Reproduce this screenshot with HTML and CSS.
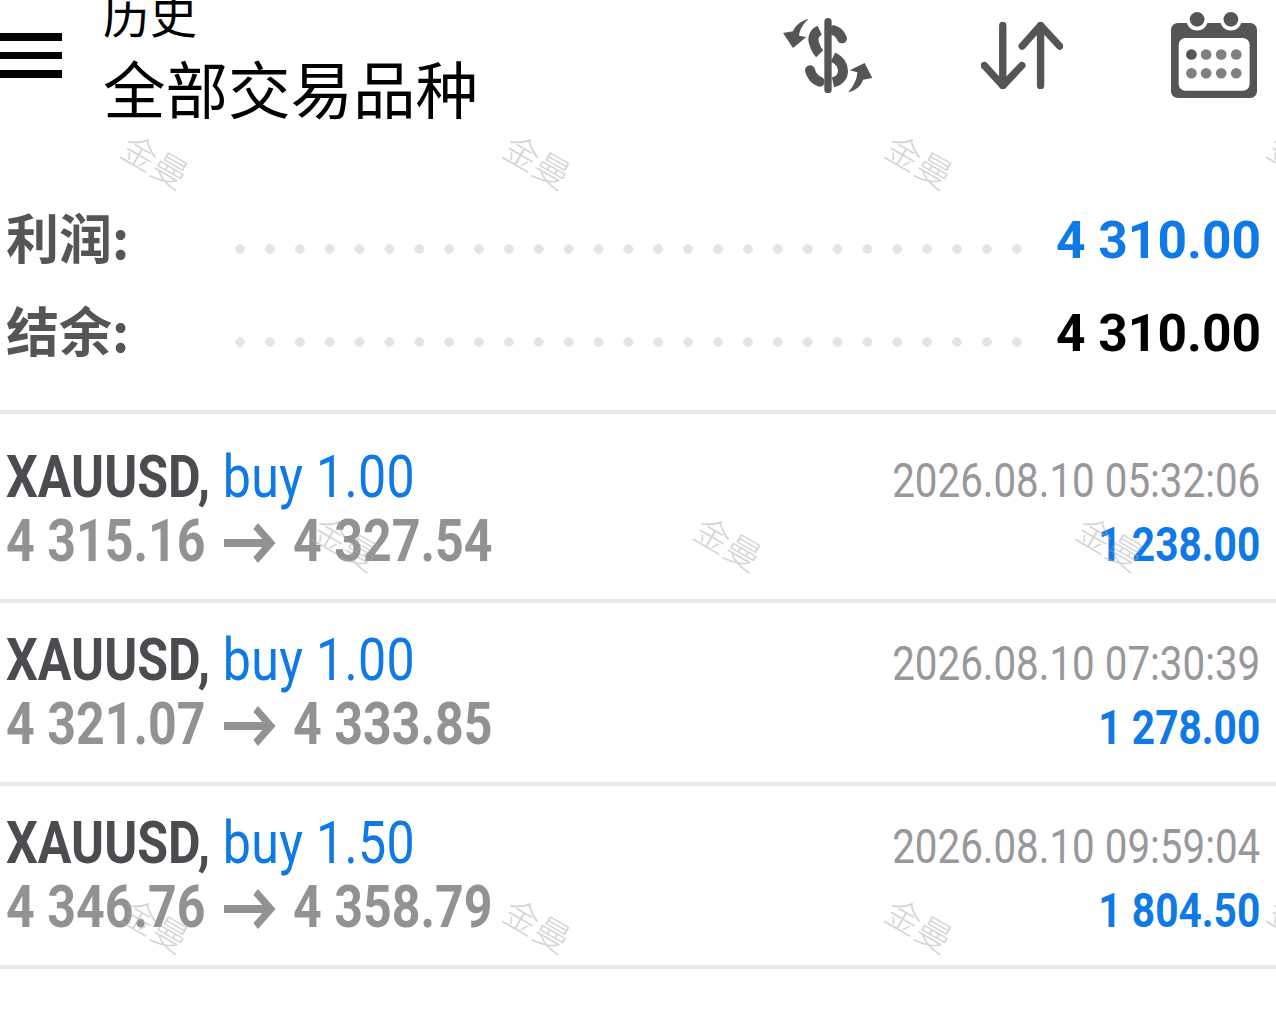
FILE: index.html
```html
<!DOCTYPE html>
<html lang="zh-CN">
<head>
  <meta charset="UTF-8" />
  <title>历史</title>
  <link rel="stylesheet" href="styles.css">
</head>
<body>
  <header class="top">
    <div class="menu"><span></span><span></span><span></span></div>
    <div class="titles">
      <div class="title-small">历史</div>
      <div class="title-big">全部交易品种</div>
    </div>
    <div class="tools">
      <svg class="ic-money" viewBox="70 55 270 225">
        <path class="fill" d="M194 66a11 11 0 0 1 22 0v204a11 11 0 0 1-22 0z"/>
        <path class="line" d="M180 92C163 100 158 114 163 130c4 14 9 24 17 32"/>
        <path class="line cap" d="M222 92c12 3 20 12 25 24"/>
        <path class="line" d="M220 172c20 10 30 24 30 42 0 18-12 30-30 34"/>
        <path class="line cap" d="M151 212c4 16 14 28 29 34"/>
        <path class="fill" d="M147 57C120 65 105 80 100 95L70 100 100 145 140 112 118 108C120 90 130 72 147 57z"/>
        <path class="fill" d="M265 278C290 272 305 258 310 240L338 235 315 190 270 212 293 218C292 240 280 262 265 278z"/>
      </svg>
      <svg class="ic-sort" viewBox="665 68 245 200">
        <path class="line thin" d="M730 78v180M675 198l55 60 57-60"/>
        <path class="line thin" d="M843 258V78M788 140l55-62 57 62"/>
      </svg>
      <svg class="ic-cal" viewBox="1235 35 257 257">
        <rect class="fill" x="1235" y="68" width="257" height="224" rx="20"/>
        <rect class="white" x="1258" y="113" width="212" height="157" rx="20"/>
        <circle class="white" cx="1313" cy="57" r="33"/>
        <circle class="white" cx="1414" cy="57" r="33"/>
        <circle class="fill" cx="1313" cy="57" r="22"/>
        <circle class="fill" cx="1414" cy="57" r="22"/>
        <circle class="fill" cx="1296" cy="162" r="16"/>
        <circle class="soft" cx="1340" cy="162" r="16"/>
        <circle class="soft" cx="1385" cy="162" r="16"/>
        <circle class="soft" cx="1430" cy="162" r="16"/>
        <circle class="soft" cx="1296" cy="218" r="16"/>
        <circle class="soft" cx="1340" cy="218" r="16"/>
        <circle class="soft" cx="1385" cy="218" r="16"/>
        <circle class="soft" cx="1430" cy="218" r="16"/>
      </svg>
    </div>
  </header>

  <section class="summary">
    <div class="sum-row">
      <span class="sum-label">利润:</span>
      <span class="dots"></span>
      <span class="sum-value blue">4 310.00</span>
    </div>
    <div class="sum-row">
      <span class="sum-label">结余:</span>
      <span class="dots"></span>
      <span class="sum-value">4 310.00</span>
    </div>
  </section>

  <section class="deals">
    <div class="deal">
      <div class="deal-left">
        <div class="line-a"><b>XAUUSD,</b> <span class="blue">buy 1.00</span></div>
        <div class="line-b">4 315.16<svg class="arrow" viewBox="0 0 62 40"><path d="M0 20h56M38 3l18 17-18 17"/></svg>4 327.54</div>
      </div>
      <div class="deal-right">
        <div class="date">2026.08.10 05:32:06</div>
        <div class="profit">1 238.00</div>
      </div>
    </div>
    <div class="deal">
      <div class="deal-left">
        <div class="line-a"><b>XAUUSD,</b> <span class="blue">buy 1.00</span></div>
        <div class="line-b">4 321.07<svg class="arrow" viewBox="0 0 62 40"><path d="M0 20h56M38 3l18 17-18 17"/></svg>4 333.85</div>
      </div>
      <div class="deal-right">
        <div class="date">2026.08.10 07:30:39</div>
        <div class="profit">1 278.00</div>
      </div>
    </div>
    <div class="deal">
      <div class="deal-left">
        <div class="line-a"><b>XAUUSD,</b> <span class="blue">buy 1.50</span></div>
        <div class="line-b">4 346.76<svg class="arrow" viewBox="0 0 62 40"><path d="M0 20h56M38 3l18 17-18 17"/></svg>4 358.79</div>
      </div>
      <div class="deal-right">
        <div class="date">2026.08.10 09:59:04</div>
        <div class="profit">1 804.50</div>
      </div>
    </div>
  </section>

  <div class="marks">
    <span class="mark m1">金曼</span>
    <span class="mark m2">金曼</span>
    <span class="mark m3">金曼</span>
    <span class="mark m4">金曼</span>
    <span class="mark m5">金曼</span>
    <span class="mark m6">金曼</span>
    <span class="mark m7">金曼</span>
    <span class="mark m8">金曼</span>
    <span class="mark m9">金曼</span>
    <span class="mark m10">金曼</span>
    <span class="mark m11">金曼</span>
  </div>
</body>
</html>
```

FILE: styles.css
```css
html, body { margin: 0; padding: 0; }
body {
  width: 1276px;
  height: 1029px;
  position: relative;
  overflow: hidden;
  background: #fff;
  font-family: Roboto, "Noto Sans CJK SC", sans-serif;
}
.blue { color: #0f7ae5; }

/* header */
.top { display: flex; height: 135px; }
.menu {
  width: 62px;
  margin-top: 33px;
  display: flex;
  flex-direction: column;
  gap: 11px;
}
.menu span { display: block; height: 7.5px; background: #000; }
.titles {
  margin-left: 41px;
  font-family: "Noto Sans CJK SC", sans-serif;
  color: #000;
}
.title-small { font-size: 47px; line-height: 46px; margin-top: -10px; }
.title-big { font-size: 62.5px; line-height: 62px; margin-top: 20px; }
.tools { position: relative; flex: 1; display: flex; padding: 12px 19px 0 0; justify-content: flex-end; }
.fill { fill: #555; }
.soft { fill: #808080; }
.white { fill: #fff; }
.line { fill: none; stroke: #555; stroke-width: 30; }
.line.cap { stroke-linecap: round; }
.line.thin { stroke-width: 22; stroke-linecap: round; stroke-linejoin: round; }
.ic-money { width: 90px; height: 75px; margin-top: 6px; }
.ic-sort { width: 82px; height: 67px; margin: 10px 0 0 108px; }
.ic-cal { width: 86px; height: 86px; margin-left: 108px; }

/* summary */
.summary { height: 271px; padding-top: 4px; border-bottom: 4px solid #e8e8e8; }
.sum-row { display: flex; align-items: center; height: 93px; }
.sum-row:first-child { margin-top: 55px; }
.sum-label {
  width: 235px;
  padding: 0 0 10px 6px;
  box-sizing: border-box;
  font-family: "Noto Sans CJK SC", sans-serif;
  font-size: 53px;
  font-weight: 700;
  color: #555;
}
.dots {
  width: 790px;
  height: 10px;
  margin-top: 16px;
  background-image: radial-gradient(circle at 5px 5px, #e4e4e4 4.5px, transparent 5px);
  background-size: 29.88px 10px;
  background-repeat: repeat-x;
}
.sum-value {
  margin-left: auto;
  margin-right: 15px;
  font-size: 51.5px;
  font-weight: 700;
  color: #000;
}
.sum-value.blue { color: #0f7ae5; }

/* deals */
.deals { padding-top: 6px; }
.deal {
  display: flex;
  justify-content: space-between;
  height: 179px;
  border-bottom: 4px solid #e8e8e8;
}
.deal-left { padding: 24px 0 0 6px; white-space: nowrap; }
.deal-right { padding: 29px 16px 0 0; text-align: right; white-space: nowrap; }
.line-a, .line-b { transform-origin: left top; }
.line-a {
  font-size: 59px;
  line-height: 65px;
  color: #4c4c50;
  transform: scaleX(.85);
}
.line-a b { font-weight: 700; }
.line-a .blue { letter-spacing: .4px; }
.line-b {
  font-size: 60px;
  line-height: 64px;
  font-weight: 700;
  color: #929295;
  transform: scaleX(.835);
}
.arrow {
  width: 62px;
  height: 40px;
  margin: 0 21px 0 22px;
  vertical-align: -2px;
}
.arrow path { fill: none; stroke: #929295; stroke-width: 8; }
.date {
  font-size: 49px;
  line-height: 64px;
  color: #98989b;
  transform-origin: right top;
  transform: scaleX(.823);
}
.profit {
  font-size: 49px;
  line-height: 64px;
  font-weight: 700;
  color: #0f7ae5;
  transform-origin: right top;
  transform: scaleX(.83);
}

/* watermark */
.marks { position: absolute; inset: 0; pointer-events: none; }
.mark {
  position: absolute;
  width: 80px;
  margin: -23px 0 0 -38px;
  text-align: center;
  font-family: "Noto Sans CJK SC", sans-serif;
  font-size: 35px;
  line-height: 40px;
  font-weight: 300;
  color: rgba(170, 170, 170, .5);
  transform: rotate(30deg);
  white-space: nowrap;
}
.m1 { left: 154px; top: 163px; }
.m2 { left: 536px; top: 163px; }
.m3 { left: 918px; top: 163px; }
.m4 { left: 1300px; top: 163px; }
.m5 { left: 345px; top: 545px; }
.m6 { left: 727px; top: 545px; }
.m7 { left: 1109px; top: 545px; }
.m8 { left: 154px; top: 927px; }
.m9 { left: 536px; top: 927px; }
.m10 { left: 918px; top: 927px; }
.m11 { left: 1300px; top: 927px; }
```
